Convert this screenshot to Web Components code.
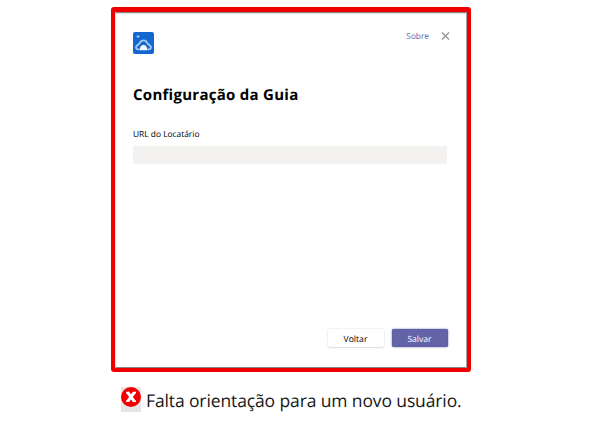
<!DOCTYPE html>
<html lang="pt-BR">
<head>
<meta charset="utf-8">
<title>Configuração da Guia</title>
<style>
html,body{margin:0;background:#fff}
body{width:592px;height:437px;overflow:hidden;font-family:"Open Sans","Noto Sans",sans-serif;color:#000;text-rendering:geometricPrecision}
</style>
</head>
<body>
<guide-example>
  <tab-dialog slot="dialog">
    <app-logo slot="logo"></app-logo>
    <about-link slot="link">Sobre</about-link>
    <close-icon slot="close"></close-icon>
    <span slot="title">Configuração da Guia</span>
    <url-field slot="field">URL do Locatário</url-field>
    <dialog-button slot="actions">Voltar</dialog-button>
    <dialog-button slot="actions" primary>Salvar</dialog-button>
  </tab-dialog>
  <error-caption slot="caption">Falta orientação para um novo usuário.</error-caption>
</guide-example>
<script>
function define(name, html) {
  customElements.define(name, class extends HTMLElement {
    constructor() {
      super();
      this.attachShadow({ mode: "open" }).innerHTML = html;
    }
  });
}

define("guide-example", `<style>
:host{display:flex;flex-direction:column;align-items:flex-start;padding:7px 0 0 111px;gap:15px}
</style><slot name="dialog"></slot><slot name="caption"></slot>`);

define("tab-dialog", `<style>
:host{display:block;box-sizing:border-box;width:360px;height:365px;border:solid #ee0000;border-width:5px 4px 4px;border-radius:3px;background:#fff}
.body{display:flex;flex-direction:column;box-sizing:border-box;height:100%;border:1px solid #8b8787;border-left-color:#e6dede;border-right-color:#aaa5a5;box-shadow:inset 0 1px 1px #ddd;padding:19px 18px 20px 17px}
header{display:flex;align-items:flex-start;height:24px;margin-right:-2px}
.space{flex:1}
h1{margin:28px 0 0;font-size:15px;line-height:22px;font-weight:700;letter-spacing:.27px;white-space:nowrap}
.field{margin:23px 1px 0 0}
footer{display:flex;justify-content:flex-end;gap:8px;margin:auto .5px 0 0}
</style><div class="body"><header><slot name="logo"></slot><span class="space"></span><slot name="link"></slot><slot name="close"></slot></header>
<h1><slot name="title"></slot></h1><div class="field"><slot name="field"></slot></div><footer><slot name="actions"></slot></footer></div>`);

define("app-logo", `<style>:host{display:block;width:21px;height:22px}svg{display:block}</style>
<svg width="21" height="22" viewBox="0 0 21 22"><rect width="21" height="22" rx="2" fill="#1268cf"/>
<rect x="3.6" y="3.4" width="2.8" height="2" rx=".6" fill="#a6cff7"/>
<path d="M6 17.4H5a2 2 0 0 1-1.4-3.4l1.7-1.6q1.2-.8 1.8-2.1Q8.3 8.3 10.5 8.3t3.400 2q.6 1.3 1.8 2.1l1.7 1.6a2 2 0 0 1-1.4 3.4H15" fill="none" stroke="#a3cbf4" stroke-width="1.8" stroke-linecap="round"/>
<path d="M7 18.3v-2.7q1.200-2.8 3.500-2.8t3.500 2.800v2.700z" fill="#f1f8ff"/></svg>`);

define("about-link", `<style>:host{display:block;font-size:8.3px;line-height:12px;color:#6264a7;margin:-1px 12px 0 0}</style><slot></slot>`);

define("close-icon", `<style>:host{display:block;width:9px;height:9px}svg{display:block}</style>
<svg width="9" height="9" viewBox="0 0 9 9"><path d="M1 .5l7 7M8 .5L1 7.5" stroke="#959595" stroke-width="1.4"/></svg>`);

define("url-field", `<style>:host{display:block}
label{display:block;font-size:8.4px;line-height:12px}
.input{height:18px;margin-top:5px;background:#f3f2f1;box-shadow:0 0 1px #eeedec;border-radius:1px}
</style><label><slot></slot></label><div class="input"></div>`);

define("dialog-button", `<style>
:host{display:flex;align-items:center;justify-content:center;box-sizing:border-box;width:56px;height:18px;padding-top:1px;border-radius:2px;background:#fff;font-size:8.6px;line-height:12px;font-weight:500;box-shadow:0 0 2px #d2d2d2,0 1px 1px #e5e5e5}
:host([primary]){background:#6264a7;color:#fff;box-shadow:0 0 2px #6264a7,inset 0 0 1px #414384}
</style><slot></slot>`);

define("error-caption", `<style>
:host{display:flex;align-items:flex-start;margin-left:10px;font-family:"Open Sans","Noto Sans",sans-serif;font-size:17.5px;letter-spacing:-.12px;line-height:29px;color:#171717;white-space:nowrap}
.mark{width:20px;height:25px;background:#e6e6e6}
svg{display:block}
.text{margin-left:5px}
</style><span class="mark"><svg width="20" height="20" viewBox="0 0 20 20"><circle cx="10" cy="10" r="10" fill="#f00000"/>
<path d="M6.7 5.5l6.6 8.8M13.3 5.5L6.7 14.3" stroke="#fff" stroke-width="3"/><path d="M5.1 5.6h3M12 5.6h3M5.1 14.2h3M12 14.2h3" stroke="#fff" stroke-width="1.6"/></svg></span><span class="text"><slot></slot></span>`);
</script>
</body>
</html>
